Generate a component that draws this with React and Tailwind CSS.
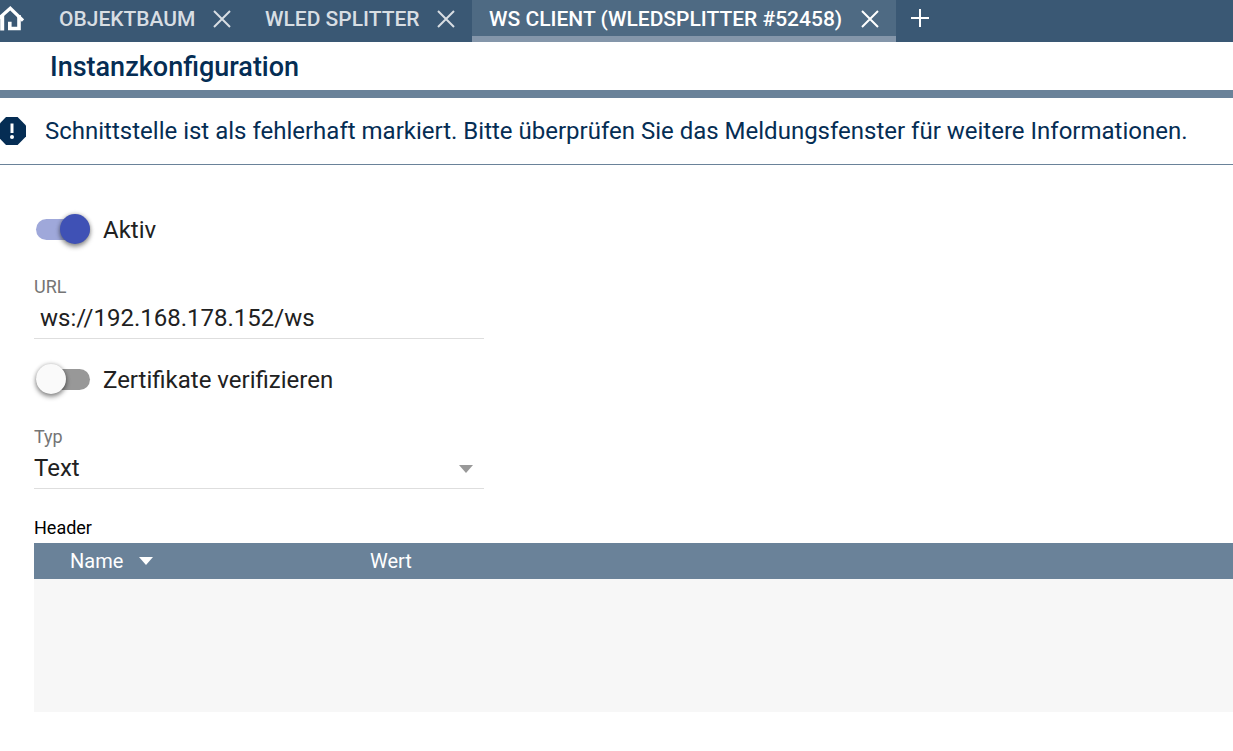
import { useState } from "react";

const initialTabs = [
  { id: "tree", label: "OBJEKTBAUM", width: "w-[206px]" },
  { id: "splitter", label: "WLED SPLITTER", width: "w-[224px]" },
  { id: "client", label: "WS CLIENT (WLEDSPLITTER #52458)", width: "w-[424px]" },
];

function HomeIcon() {
  return (
    <svg width="24" height="42" viewBox="0 0 24 42" fill="none" stroke="#fff">
      <path d="M-4 21 10.300 8.300 23 20.500" strokeWidth="3.200" />
      <path d="M2.200 15V30.500" strokeWidth="4" />
      <path d="M9.800 21.700V28.500H19V15" strokeWidth="3.600" />
    </svg>
  );
}

function CloseIcon() {
  return (
    <svg width="18" height="18" viewBox="0 0 18 18" stroke="currentColor" strokeWidth="2">
      <path d="M1 1 17 17M17 1 1 17" />
    </svg>
  );
}

function AlertIcon() {
  return (
    <svg width="26" height="28" viewBox="0 0 26 28" className="shrink-0">
      <path d="M6 0H17.600L26 8.400V19.600L17.600 28H6L-2 19.600V8.400Z" fill="#052d54" />
      <path d="M10.500 6.500H13.500V16H10.500Z" fill="#fff" />
      <circle cx="12" cy="20" r="2" fill="#fff" />
    </svg>
  );
}

function Arrow({ className }) {
  return (
    <svg width="14" height="8" viewBox="0 0 14 8" className={className} fill="currentColor">
      <path d="M0 0H14L7 8Z" />
    </svg>
  );
}

function Toggle({ label, checked, onChange }) {
  return (
    <label className="flex h-9 w-fit cursor-pointer items-center gap-[13px] text-2xl">
      <span className="relative flex h-[30px] w-14 items-center pl-0.5">
        <input
          type="checkbox"
          role="switch"
          className="peer h-[21px] w-full appearance-none rounded-full bg-[#989898] checked:bg-[#9fa8da]"
          checked={checked}
          onChange={(e) => onChange(e.target.checked)}
        />
        <span className="pointer-events-none absolute left-0.5 top-0 h-[30px] w-[30px] rounded-full bg-[#fafafa] shadow-[0_3px_5px_rgba(0,0,0,0.4),0_0_4px_rgba(0,0,0,0.25)] peer-checked:left-[26px] peer-checked:bg-[#3f51b5]" />
      </span>
      <span className="pt-0.5">{label}</span>
    </label>
  );
}

export default function App() {
  const [tabs, setTabs] = useState(initialTabs);
  const [activeTab, setActiveTab] = useState("client");
  const [active, setActive] = useState(true);
  const [verify, setVerify] = useState(false);
  const [url, setUrl] = useState("ws://192.168.178.152/ws");
  const [type, setType] = useState("Text");

  return (
    <div className="overflow-hidden bg-white font-[Roboto,sans-serif] text-[#212121]">
      <nav className="flex h-[42px] bg-[#3a5874] text-white">
        <button className="w-[42px] shrink-0" aria-label="Start">
          <HomeIcon />
        </button>
        {tabs.map((tab) => (
          <div
            key={tab.id}
            className={`flex shrink-0 items-center justify-between border-b-[6px] pl-[17px] pr-[17px] pt-px ${tab.width} ${
              tab.id === activeTab
                ? "border-[#8496aa] bg-[#4e6a83] text-white"
                : "border-transparent text-[#d8dee3]"
            }`}
          >
            <button
              className="whitespace-nowrap text-[21px] font-medium leading-9"
              onClick={() => setActiveTab(tab.id)}
            >
              {tab.label}
            </button>
            <button
              aria-label={`${tab.label} schließen`}
              onClick={() => setTabs(tabs.filter((t) => t.id !== tab.id))}
            >
              <CloseIcon />
            </button>
          </div>
        ))}
        <button className="flex h-9 w-12 items-center justify-center" aria-label="Neuer Tab">
          <svg width="18" height="18" viewBox="0 0 18 18" stroke="currentColor" strokeWidth="2">
            <path d="M9 0V18M0 9H18" />
          </svg>
        </button>
      </nav>

      <header className="h-14 border-b-8 border-[#6a8299] pl-[50px]">
        <h1 className="text-[27px] font-medium leading-[50px] text-[#052d54]">Instanzkonfiguration</h1>
      </header>

      <div className="flex h-[67px] items-center gap-[19px] border-b border-[#6a8299] text-2xl text-[#052d54]" role="alert">
        <AlertIcon />
        <p className="whitespace-nowrap">
          Schnittstelle ist als fehlerhaft markiert. Bitte überprüfen Sie das Meldungsfenster für weitere Informationen.
        </p>
      </div>

      <main className="pb-10 pl-[34px] pt-[46px]">
        <Toggle label="Aktiv" checked={active} onChange={setActive} />

        <div className="mt-7 w-[450px] border-b border-[#dedede]">
          <label htmlFor="url" className="block text-lg leading-6 text-[#757575]">URL</label>
          <input
            id="url"
            className="block h-[39px] w-full px-1.5 pb-0.5 text-2xl outline-none"
            value={url}
            onChange={(e) => setUrl(e.target.value)}
          />
        </div>

        <div className="mt-[22px]">
          <Toggle label="Zertifikate verifizieren" checked={verify} onChange={setVerify} />
        </div>

        <div className="relative mt-7 w-[450px] border-b border-[#dedede]">
          <label htmlFor="type" className="block text-lg leading-6 text-[#757575]">Typ</label>
          <select
            id="type"
            className="block h-[39px] w-full appearance-none pb-0.5 text-2xl outline-none"
            value={type}
            onChange={(e) => setType(e.target.value)}
          >
            <option>Text</option>
            <option>Binär</option>
          </select>
          <Arrow className="pointer-events-none absolute bottom-[15px] right-[11px] text-[#999]" />
        </div>

        <h2 id="headers" className="mt-[25px] pb-0.5 text-lg leading-[27px] text-black">Header</h2>
        <table className="w-full table-fixed bg-[#f7f7f7] text-left text-xl" aria-labelledby="headers">
          <thead className="bg-[#6a8299] text-white">
            <tr className="h-9">
              <th className="w-[300px] py-0 pl-9 font-normal">
                <button className="flex items-center gap-4">
                  Name
                  <Arrow />
                </button>
              </th>
              <th className="py-0 pl-9 font-normal">Wert</th>
            </tr>
          </thead>
          <tbody>
            <tr className="h-[133px]">
              <td colSpan={2} />
            </tr>
          </tbody>
        </table>
      </main>
    </div>
  );
}
